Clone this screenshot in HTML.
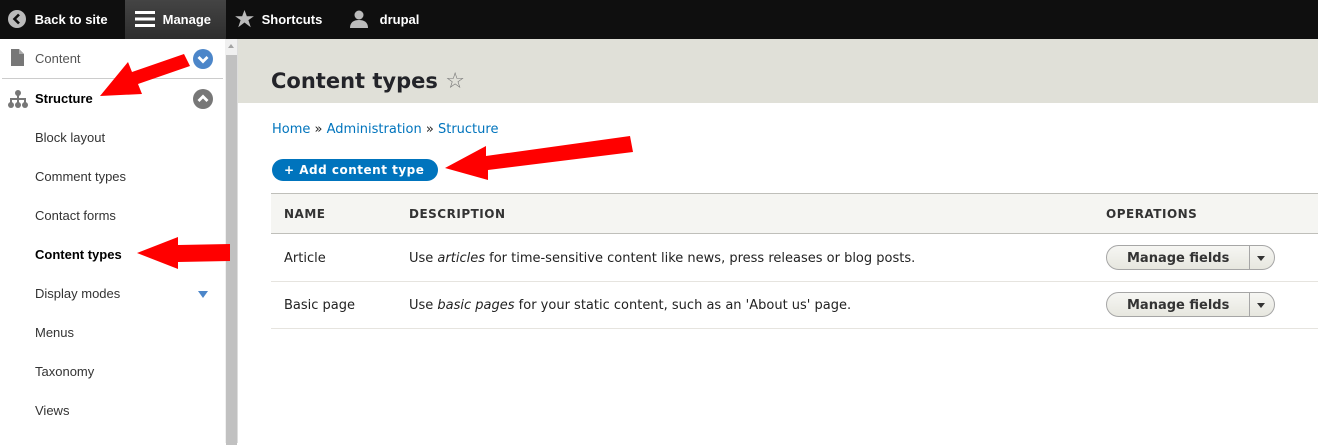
<!DOCTYPE html>
<html><head><meta charset="utf-8"><style>
*{margin:0;padding:0;box-sizing:border-box}
body{width:1318px;height:443px;overflow:hidden;background:#fff;font-family:"Liberation Sans",sans-serif;position:relative}
.tb{position:absolute;left:0;top:0;width:1318px;height:39px;background:#0f0f0f;color:#fff;font-weight:bold;font-size:13px}
.tb div{position:absolute;top:0;height:39px;line-height:39px}
.side{position:absolute;left:0;top:39px;width:225px;height:404px;background:#fff;font-size:13px;color:#333}
.side .it{position:absolute;left:35px}
.sb{position:absolute;left:225px;top:39px;width:13px;height:404px;background:#f0f0f0;border-right:1px solid #ddd}
.hd{position:absolute;left:238px;top:39px;width:1080px;height:64px;background:#e0e0d8}
.main{font-family:"DejaVu Sans",sans-serif;font-size:13px;color:#222}
a{color:#0074bd;text-decoration:none}
.th{position:absolute;left:271px;top:193px;width:1047px;height:41px;background:#f5f5f2;border-top:1px solid #bfbfba;border-bottom:1px solid #bfbfba}
.cell{position:absolute;font-size:13px}
.hdr{font-weight:bold;font-size:12px;letter-spacing:.5px;color:#333}
.btn{position:absolute;left:1106px;width:169px;height:25px;border:1px solid #a6a6a6;border-radius:13px;background:linear-gradient(#f6f6f3,#e7e7df);font-weight:bold;font-size:13px;color:#333}
.btn span{position:absolute;left:20px;top:4px}
.btn i{position:absolute;left:142px;top:0;height:23px;border-left:1px solid #a6a6a6}
.btn b{position:absolute;left:150px;top:10px;border:4px solid transparent;border-top:5px solid #333}
</style></head><body>
<div class="tb">
<div style="left:8px"><svg width="18" height="18" viewBox="0 0 18 18" style="vertical-align:-4px"><circle cx="9" cy="9" r="9" fill="#bbb"/><path d="M11 4.5L6.5 9 11 13.5" stroke="#0f0f0f" stroke-width="2.6" fill="none"/></svg> <span style="margin-left:5px">Back to site</span></div>
<div style="left:125px;width:101px;background:linear-gradient(#444,#2e2e2e);padding-left:10px"><svg width="20" height="16" viewBox="0 0 20 16" style="vertical-align:-3px"><rect y="0" width="20" height="3" fill="#fff"/><rect y="6.5" width="20" height="3" fill="#fff"/><rect y="13" width="20" height="3" fill="#fff"/></svg> <span style="margin-left:4px">Manage</span></div>
<div style="left:235px"><svg width="19" height="18" viewBox="0 0 24 23" style="vertical-align:-4px"><path d="M12 0l3 8h9l-7 5 3 9-8-6-8 6 3-9-7-5h9z" fill="#bbb"/></svg> <span style="margin-left:4px">Shortcuts</span></div>
<div style="left:350px"><svg width="18" height="18" viewBox="0 0 18 18" style="vertical-align:-4px"><circle cx="9" cy="5" r="4.5" fill="#bbb"/><path d="M0 18c0-6 4-8 9-8s9 2 9 8z" fill="#bbb"/></svg> <span style="margin-left:8px">drupal</span></div>
</div>
<div class="side">
<svg style="position:absolute;left:11px;top:10px" width="13" height="17" viewBox="0 0 13 17"><path d="M0 0h8l5 5v12H0z" fill="#777"/><path d="M8 0v5h5" fill="#aaa"/></svg>
<div class="it" style="top:12px;color:#555">Content</div>
<svg style="position:absolute;left:193px;top:10px" width="20" height="20"><circle cx="10" cy="10" r="10" fill="#4c86c9"/><path d="M5.5 8l4.5 4.5L14.5 8" stroke="#fff" stroke-width="2.8" fill="none"/></svg>
<div style="position:absolute;left:2px;top:39px;width:221px;border-top:1px solid #ccc"></div>
<svg style="position:absolute;left:8px;top:51px" width="20" height="18" viewBox="0 0 20 18"><circle cx="10" cy="3" r="3" fill="#777"/><rect x="9" y="4" width="2" height="6" fill="#777"/><rect x="3" y="8" width="14" height="2" fill="#777"/><rect x="2" y="8" width="2" height="6" fill="#777"/><rect x="9" y="8" width="2" height="6" fill="#777"/><rect x="16" y="8" width="2" height="6" fill="#777"/><circle cx="3" cy="15" r="3" fill="#777"/><circle cx="10" cy="15" r="3" fill="#777"/><circle cx="17" cy="15" r="3" fill="#777"/></svg>
<div class="it" style="top:52px;font-weight:bold;color:#000">Structure</div>
<svg style="position:absolute;left:193px;top:50px" width="20" height="20"><circle cx="10" cy="10" r="10" fill="#777"/><path d="M5.5 12l4.5-4.5L14.5 12" stroke="#fff" stroke-width="2.8" fill="none"/></svg>
<div class="it" style="top:91px">Block layout</div>
<div class="it" style="top:130px">Comment types</div>
<div class="it" style="top:169px">Contact forms</div>
<div class="it" style="top:208px;font-weight:bold;color:#000">Content types</div>
<div class="it" style="top:247px">Display modes</div>
<div style="position:absolute;left:198px;top:252px;border:5px solid transparent;border-top:7px solid #4c86c9;border-bottom:0"></div>
<div class="it" style="top:286px">Menus</div>
<div class="it" style="top:325px">Taxonomy</div>
<div class="it" style="top:364px">Views</div>
</div>
<div class="sb"><div style="position:absolute;left:1px;top:16px;width:11px;height:390px;background:#c1c1c1"></div><div style="position:absolute;left:3px;top:5px;border:3px solid transparent;border-bottom:4px solid #a3a3a3;border-top:0"></div></div>
<div class="hd"></div>
<div class="main">
<div style="position:absolute;left:271px;top:69px;font-size:21px;font-weight:bold;color:#232429">Content types <span style="font-weight:normal;color:#777;font-size:22px">☆</span></div>
<div style="position:absolute;left:272px;top:122px"><a>Home</a> » <a>Administration</a> » <a>Structure</a></div>
<div style="position:absolute;left:272px;top:159px;width:166px;height:22px;border-radius:11px;background:#0074bd;color:#fff;font-weight:bold;font-size:12px;line-height:22px;padding-left:12px;letter-spacing:.5px">+ Add content type</div>
<div class="th"></div>
<div class="cell hdr" style="left:284px;top:207px">NAME</div>
<div class="cell hdr" style="left:409px;top:207px">DESCRIPTION</div>
<div class="cell hdr" style="left:1106px;top:207px">OPERATIONS</div>
<div class="cell" style="left:284px;top:251px">Article</div>
<div class="cell" style="left:409px;top:251px">Use <i>articles</i> for time-sensitive content like news, press releases or blog posts.</div>
<div class="btn" style="top:245px"><span style="top:5px">Manage fields</span><i></i><b></b></div>
<div style="position:absolute;left:271px;top:281px;width:1047px;border-top:1px solid #e6e4df"></div>
<div class="cell" style="left:284px;top:298px">Basic page</div>
<div class="cell" style="left:409px;top:298px">Use <i>basic pages</i> for your static content, such as an 'About us' page.</div>
<div class="btn" style="top:292px"><span style="top:5px">Manage fields</span><i></i><b></b></div>
<div style="position:absolute;left:271px;top:328px;width:1047px;border-top:1px solid #e6e4df"></div>
</div>
<svg style="position:absolute;left:0;top:0" width="1318" height="443">
<polygon fill="#f00" points="100,96 128,62 132,72 184,54 190,66 138,84 142,94"/>
<polygon fill="#f00" points="445,168 486,146 486,156 630,136 633,152 488,170 488,180"/>
<polygon fill="#f00" points="137,253 178,237 178,245 230,244 230,261 178,262 178,269"/>
</svg>
</body></html>
